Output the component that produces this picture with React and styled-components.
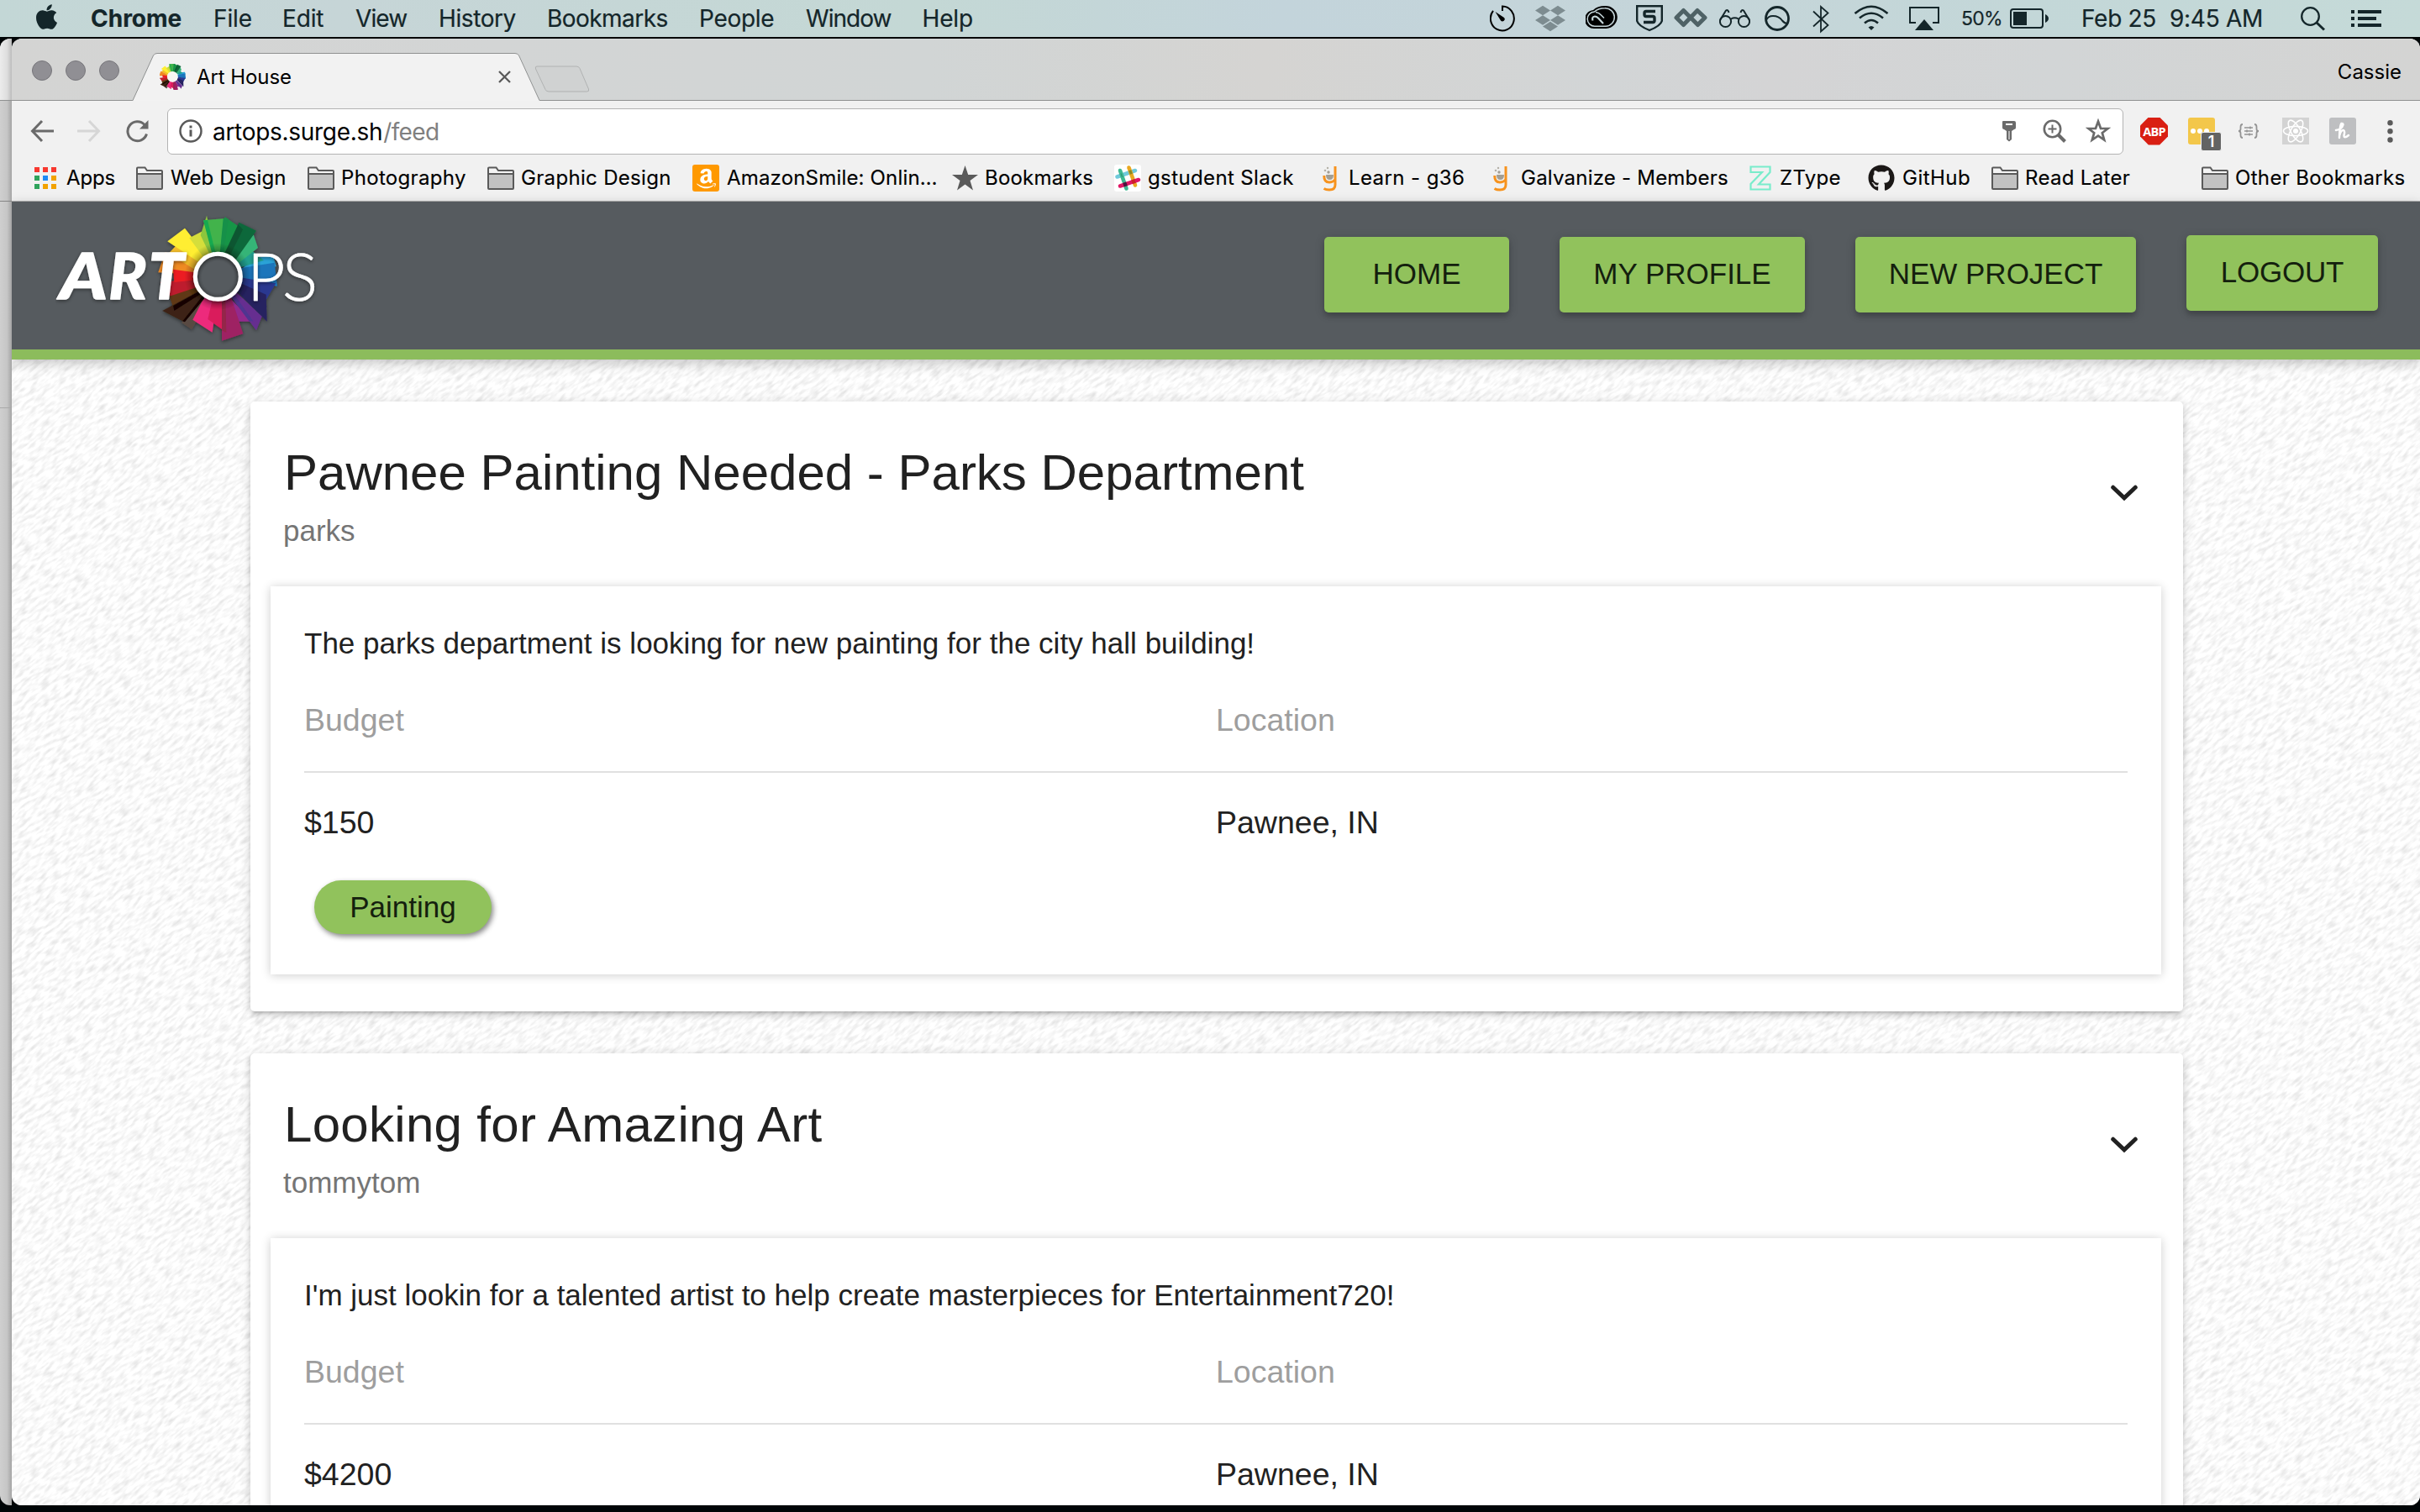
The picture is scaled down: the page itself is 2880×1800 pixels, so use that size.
import React from 'react';
import styled, { createGlobalStyle } from 'styled-components';
import { FaApple, FaAmazon, FaDropbox, FaGithub } from 'react-icons/fa';

const GlobalStyle = createGlobalStyle`
  *, *::before, *::after { box-sizing: border-box; }
  body { margin: 0; background: #000507; overflow: hidden; }
`;

const sans = `"Liberation Sans", Arial, Helvetica, sans-serif`;
const system = `Inter, "Helvetica Neue", sans-serif`;

/* ---------- desktop ---------- */

const Desktop = styled.div`
  width: 2880px;
  height: 1800px;
  display: flex;
  flex-direction: column;
  background: #000507;
  font-family: ${sans};
`;

const MenuBar = styled.header`
  height: 46px;
  flex: none;
  display: flex;
  justify-content: space-between;
  border-bottom: 2px solid #000406;
  background: linear-gradient(90deg, #c3d7d6 0%, #c6d5d7 14%, #c4d8d5 38%, #c3d4db 53%, #c5d5d9 70%, #c3d7d8 84%, #c5dad8 100%);
  color: #14262a;
  font: 500 28px/44px ${system};
`;

const MenuGroup = styled.div`
  display: flex;
  padding-left: ${p => p.$left || 0}px;
  padding-right: ${p => p.$right || 0}px;
`;

const MenuItem = styled.span`
  flex: none;
  width: ${p => p.$w}px;
  white-space: pre;
  font-weight: ${p => (p.$bold ? 700 : 400)};
  font-size: ${p => p.$size || 28}px;
  letter-spacing: ${p => p.$ls || 0}px;
  -webkit-text-stroke: 0.2px currentColor;
`;

const AppleMark = styled(FaApple)`
  width: 27px;
  height: 34px;
  margin: 3px 39px 0 0;
`;

const StatusIcon = styled.svg.attrs(p => ({
  viewBox: `${p.$x} 0 ${p.$w} 44`,
  fill: 'none',
  stroke: 'currentColor',
  strokeWidth: 2,
}))`
  flex: none;
  width: ${p => p.$w}px;
  height: 44px;
  margin-right: ${p => p.$gap}px;
  color: ${p => p.$color || '#14262a'};
`;

const DropboxMark = styled(FaDropbox)`
  flex: none;
  width: 36px;
  height: 36px;
  margin: 4px 24px 0 -1px;
  color: #7d8c90;
`;

const WindowArea = styled.div`
  height: 1746px;
  flex: none;
  display: flex;
`;

const BackWindow = styled.div`
  width: 14px;
  flex: none;
  display: flex;
  flex-direction: column;
  border-radius: 12px 0 0 12px;
  overflow: hidden;
  background: linear-gradient(90deg, #cfcfcf 0%, #c6c6c6 60%, #a4a4a4 100%);
`;

const BackWindowPart = styled.div`
  height: ${p => p.$h}px;
  border-bottom: ${p => p.$line || 2}px solid ${p => p.$edge};
  background: ${p => p.$bg || 'transparent'};
`;

const Browser = styled.div`
  flex: 1;
  min-width: 0;
  display: flex;
  flex-direction: column;
  border-radius: 12px;
  overflow: hidden;
  background: #f1f1f1;
`;

/* ---------- tab strip ---------- */

const TabStrip = styled.div`
  height: 74px;
  flex: none;
  display: flex;
  align-items: flex-end;
  background:
    linear-gradient(#8f9191, #8f9191) bottom / 100% 1px no-repeat,
    linear-gradient(90deg, #d4d4d3 0%, #d3d5d5 20%, #d1d5d5 38%, #d5d4d2 52%, #d2d5d6 66%, #d4d4d5 73%, #d2d5d6 85%, #d4d4d3 100%);
  padding-right: 22px;
`;

const TrafficLights = styled.div`
  display: flex;
  gap: 16px;
  align-self: flex-start;
  padding: 26px 16px 0 24px;
`;

const Light = styled.i`
  width: 24px;
  height: 24px;
  border-radius: 50%;
  background: #908f94;
  border: 1px solid #77767b;
`;

const Tab = styled.div`
  width: 486px;
  height: 57px;
  display: grid;
  & > * { grid-area: 1 / 1; }
`;

const TabBody = styled.div`
  display: flex;
  align-items: center;
  padding: 0 36px 0 32px;
  font: 24px/32px ${system};
  color: #000;
`;

const TabTitle = styled.span`
  flex: 1;
  padding-left: 13px;
  letter-spacing: -0.08px;
`;

const NewTab = styled.svg`
  width: 66px;
  height: 32px;
  margin: 0 0 10px -8px;
`;

const Profile = styled.span`
  margin-left: auto;
  align-self: flex-start;
  padding-top: 24px;
  font: 24px/32px ${system};
  color: #000;
`;

/* ---------- toolbar ---------- */

const Toolbar = styled.div`
  height: 65px;
  flex: none;
  display: flex;
  align-items: center;
  padding: 7px 0 0 22px;
`;

const ToolIcon = styled.svg.attrs(p => ({ viewBox: p.viewBox || `0 0 ${p.$w} ${p.$h || 28}`, fill: p.$fill || 'none' }))`
  flex: none;
  width: ${p => p.$w}px;
  height: ${p => p.$h || 28}px;
  margin-right: ${p => p.$gap || 0}px;
  color: ${p => p.$color || '#5a5a5a'};
`;

const AddressBar = styled.div`
  width: 2328px;
  height: 55px;
  flex: none;
  display: flex;
  align-items: center;
  padding: 0 14px 0 13px;
  margin-right: 20px;
  border: 1px solid #b3b3b3;
  border-radius: 6px;
  background: #fff;
  font: 28px/40px ${system};
  color: #000;
`;

const Url = styled.span`
  flex: 1;
  padding: 1px 0 0 12px;
  letter-spacing: -0.3px;
  em { font-style: normal; color: #808080; letter-spacing: -0.6px; margin-left: 1px; }
`;

const AbpBadge = styled.span`
  width: 33px;
  height: 33px;
  margin-right: 24px;
  display: grid;
  place-items: center;
  background: #d91f13;
  clip-path: polygon(30% 0, 70% 0, 100% 30%, 100% 70%, 70% 100%, 30% 100%, 0 70%, 0 30%);
  color: #fff;
  font: 700 14.5px/33px "Open Sans", ${sans};
  letter-spacing: -0.8px;
`;

const NoteBadge = styled.span`
  position: relative;
  width: 32px;
  height: 32px;
  margin-right: 27px;
  border-radius: 3px;
  background: #f3c74a;
`;

const NoteCount = styled.b`
  position: absolute;
  left: 15px;
  top: 17px;
  width: 25px;
  height: 23px;
  border: 1px solid #f1f1f1;
  border-radius: 3px;
  background: #636363;
  color: #fff;
  font: 600 18px/21px ${system};
  text-align: center;
`;

const NoteDots = styled.i`
  display: flex;
  gap: 2px;
  padding: 13px 0 0 3px;
  i { width: 6px; height: 6px; border-radius: 50%; background: #fff; }
`;

/* ---------- bookmarks ---------- */

const BookmarksBar = styled.nav`
  height: 55px;
  flex: none;
  display: flex;
  align-items: center;
  padding: 0 0 0 27px;
  border-bottom: 1px solid #b3b3b3;
  color: #000;
  font: 24px/32px ${system};
`;

const Bookmark = styled.a`
  flex: none;
  display: flex;
  align-items: center;
  height: 34px;
  width: ${p => p.$w}px;
  letter-spacing: ${p => p.$ls || 0}px;
  white-space: pre;
  -webkit-text-stroke: 0.15px #000;
  margin-left: ${p => (p.$end ? 'auto' : 0)};
`;

const BookmarkIcon = styled.span`
  flex: none;
  display: flex;
  align-items: center;
  width: ${p => p.$w}px;
  height: 34px;
`;

const Tile = styled.span`
  width: 32px;
  height: 32px;
  display: grid;
  place-items: center;
  border-radius: 3px;
  background: ${p => p.$bg};
  color: #fff;
  svg { display: block; }
`;

const AppsGrid = styled.span`
  display: grid;
  grid-template-columns: repeat(3, 6px);
  gap: 4px;
`;

const Dot = styled.i`
  width: 6px;
  height: 6px;
  background: ${p => p.$c};
`;

/* ---------- site ---------- */

const SiteHeader = styled.header`
  height: 188px;
  flex: none;
  position: relative;
  display: flex;
  justify-content: space-between;
  align-items: flex-start;
  padding: 42px 50px 0 52px;
  background: #565b5f;
  border-bottom: 12px solid #8cbc5c;
  box-shadow: 0 4px 14px rgba(0, 0, 0, 0.24);
  z-index: 1;
`;

const Logo = styled.svg`
  width: 320px;
  height: 160px;
  margin-top: -30px;
`;

const Nav = styled.nav`
  display: flex;
  gap: 60px;
`;

const NavButton = styled.a`
  width: ${p => p.$w}px;
  height: 90px;
  margin-top: ${p => p.$shift || 0}px;
  padding-bottom: 2px;
  display: flex;
  align-items: center;
  justify-content: center;
  border-radius: 5px;
  background: #91c25c;
  box-shadow: 0 5px 5px rgba(0, 0, 0, 0.14), 0 2px 12px rgba(0, 0, 0, 0.18);
  color: #14200e;
  font-size: 35px;
  line-height: 44px;
  letter-spacing: ${p => p.$ls || 0}px;
`;

const Page = styled.main`
  flex: 1;
  min-height: 0;
  display: grid;
  grid-template: 1364px / 2866px;
  background: #fff;
  overflow: hidden;
  & > * { grid-area: 1 / 1; }
`;

const Texture = styled.svg`
  display: block;
  width: 2866px;
  height: 1364px;
`;

const Feed = styled.div`
  display: flex;
  flex-direction: column;
  gap: 50px;
  width: 2300px;
  margin: 50px 0 0 284px;
  isolation: isolate;
`;

const Card = styled.article`
  flex: none;
  height: 726px;
  border-radius: 5px;
  background: #fff;
  box-shadow: 0 4px 6px rgba(0, 0, 0, 0.12), 0 2px 13px rgba(0, 0, 0, 0.13), 0 6px 3px -4px rgba(0, 0, 0, 0.12);
`;

const CardHeader = styled.div`
  height: 220px;
  display: flex;
  justify-content: space-between;
  padding: 40px 40px 0 39px;
`;

const Title = styled.h2`
  margin: 0 0 3px 1px;
  font-weight: 400;
  font-size: 60px;
  line-height: 90px;
  letter-spacing: ${p => p.$ls || 0}px;
  color: #212121;
`;

const Author = styled.p`
  margin: 0;
  font-size: 35px;
  line-height: 42px;
  color: #757575;
`;

const Chevron = styled.svg`
  width: 60px;
  height: 60px;
  margin-top: 39px;
`;

const Details = styled.section`
  width: 2250px;
  height: 462px;
  margin-left: 24px;
  padding: 40px;
  background: #fff;
  color: #212121;
  box-shadow: 0 1px 11px rgba(0, 0, 0, 0.2);
`;

const Description = styled.p`
  margin: 0;
  font-size: 35px;
  line-height: 56px;
  letter-spacing: ${p => p.$ls || 0}px;
`;

const Row = styled.div`
  display: grid;
  grid-template-columns: 1fr 1fr;
  font-size: 37.5px;
  line-height: ${p => (p.$head ? 126 : 118)}px;
  height: ${p => (p.$head ? 126 : 118)}px;
  color: ${p => (p.$head ? '#9e9e9e' : '#212121')};
  border-bottom: ${p => (p.$head ? '2px solid #e0e0e0' : '0')};
`;

const Tag = styled.span`
  display: flex;
  align-items: center;
  justify-content: center;
  width: 211px;
  height: 64px;
  margin: 10px 0 0 12px;
  border-radius: 32px;
  background: #91c25c;
  box-shadow: 2px 3px 6px rgba(0, 0, 0, 0.48);
  color: #14200e;
  font-size: 35px;
`;

/* ---------- icons ---------- */

const Folder = () => (
  <svg width="32" height="28" viewBox="0 0 32 28">
    <path d="M1 26V2.500Q1 1.500 2 1.500H10.500L13 5H30Q31 5 31 6V26Q31 27 30 27H2Q1 27 1 26Z" fill="#f4f4f4" stroke="#5a5a5a" strokeWidth="2" />
    <path d="M2 9H30V26H2Z" fill="#c2c2c2" />
    <path d="M1 9H31" stroke="#5a5a5a" strokeWidth="2" />
  </svg>
);

const GalvanizeMark = () => (
  <svg width="17" height="32" viewBox="0 0 17 32">
    <path d="M15 2V24Q15 30 8 30Q4 30 1.500 28.500" fill="none" stroke="#f7931e" strokeWidth="3" />
    <path d="M1.800 13Q1.500 21 8 21Q12 21 15 18" fill="none" stroke="#f7931e" strokeWidth="3" />
    <path d="M4 12H13Q13 18 8.500 18Q4 18 4 12Z" fill="#a39e93" />
    <circle cx="3" cy="7" r="1.300" fill="#b5b1a8" /><circle cx="7" cy="9" r="1.700" fill="#a39e93" /><circle cx="6" cy="4" r="1.200" fill="#b5b1a8" />
  </svg>
);

const SlackMark = () => (
  <svg width="32" height="32" viewBox="0 0 32 32" strokeLinecap="round" strokeWidth="4.600" fill="none">
    <path d="M3.500 14.500L25 7" stroke="#70cadb" />
    <path d="M7 7L14.500 28.500" stroke="#3eb991" />
    <path d="M17.500 3.500L25 24.500" stroke="#e9a820" />
    <path d="M7 25.500L29 18" stroke="#e01765" />
    <path d="M8.300 12.800L9.300 12.450" stroke="#2f8c78" strokeLinecap="butt" strokeWidth="4.800" />
    <path d="M18 9.500L21 8.400" stroke="#8b8a23" strokeLinecap="butt" strokeWidth="4.800" />
    <path d="M11 24.200L15 22.800" stroke="#4b163f" strokeLinecap="butt" strokeWidth="4.800" />
    <path d="M21 20.800L25 19.400" stroke="#cc2027" strokeLinecap="butt" strokeWidth="4.800" />
  </svg>
);

const wheel = [
  ['565,283 590,210 690,255 700,290', '#ef8a24'],
  ['602,215 632,184 715,232 700,275', '#f4bd2c'],
  ['598,172 660,125 745,235 715,250', '#ffee30'],
  ['676,160 720,137 765,230 735,240', '#d5de3b'],
  ['716,150 738,80 772,225 752,225', '#8cc63e'],
  ['905,230 975,222 986,262 862,272', '#29a3d8'],
  ['858,268 980,248 990,332 860,305', '#1b75bb'],
  ['893,200 942,240 862,264 845,245', '#22a08f'],
  ['905,148 921,195 852,250 825,240', '#36b477'],
  ['853,104 915,134 840,240 800,225', '#10673b'],
  ['803,85 868,130 815,225 783,225', '#199546'],
  ['850,112 868,130 822,220 803,212', '#0b5730'],
  ['726,97 803,90 792,225 762,225', '#42b34c'],
  ['726,97 741,96 770,215 757,215', '#19aa50'],
  ['797,90 816,92 798,215 785,215', '#149048'],
  ['866,302 985,322 950,380 855,340', '#2a3990'],
  ['860,322 950,362 953,458 845,350', '#262261'],
  ['840,350 935,440 915,490 822,365', '#662f90'],
  ['812,365 902,458 838,458 795,370', '#92298d'],
  ['835,360 905,458 890,458 822,365', '#4f3590'],
  ['648,462 720,365 745,378 685,487', '#594a42'],
  ['688,452 730,370 775,380 758,497', '#ed2a7b'],
  ['742,450 758,380 798,380 808,497', '#da1c5c'],
  ['792,527 792,380 826,375 868,502', '#9e2063'],
  ['792,490 792,385 805,385 808,497', '#942548'],
  ['572,318 700,305 705,340 610,370', '#be1e2d'],
  ['605,368 705,335 722,360 622,418', '#603913'],
  ['580,420 708,350 730,375 658,460', '#3c2415'],
  ['618,402 712,350 720,358 622,420', '#160500'],
  ['652,457 722,368 730,375 660,460', '#160500'],
  ['618,272 695,283 698,310 622,318', '#ec1c24'],
];

const ArtOpsLogo = () => (
  <Logo viewBox="198 66 960 480">
    <defs>
      <filter id="soft" x="-20%" y="-20%" width="140%" height="140%">
        <feDropShadow dx="0" dy="4" stdDeviation="7" floodColor="#000" floodOpacity="0.5" />
      </filter>
      <radialGradient id="rim" cx="778" cy="298" r="150" gradientUnits="userSpaceOnUse">
        <stop offset="0.55" stopColor="#000" stopOpacity="0.35" />
        <stop offset="0.8" stopColor="#000" stopOpacity="0" />
      </radialGradient>
      <radialGradient id="hub" cx="778" cy="298" r="80" gradientUnits="userSpaceOnUse">
        <stop offset="0.7" stopColor="#565b5f" />
        <stop offset="1" stopColor="#44484b" />
      </radialGradient>
    </defs>
    <g filter="url(#soft)">
      {wheel.map(([points, fill], i) => <polygon key={i} points={points} fill={fill} />)}
      <circle cx="778" cy="298" r="122" fill="url(#rim)" />
    </g>
    <circle cx="778" cy="298" r="82" fill="url(#hub)" />
    <g filter="url(#soft)" fill="#fff" fontFamily="Lato, sans-serif">
      <circle cx="778" cy="298" r="81" fill="none" stroke="#fff" strokeWidth="15" />
      <g fontSize="226" fontWeight="900" fontStyle="italic" stroke="#fff" strokeWidth="4" strokeLinejoin="round">
        <text x="214" y="377" textLength="170" lengthAdjust="spacingAndGlyphs">A</text>
        <text x="388" y="377">R</text>
        <text x="530" y="377">T</text>
      </g>
      <g fontSize="236" fontWeight="300" stroke="#fff" strokeWidth="2">
        <text x="882" y="383">P</text>
        <text x="1008" y="383">S</text>
      </g>
    </g>
  </Logo>
);

const StatusIcons = () => (
  <>
    <StatusIcon $x={1773} $w={30} $gap={25} $color="#000">
      <path d="M1788 13V7.500A14 14.500 0 1 1 1777 12.800" />
      <path d="M1779.500 14L1790 21A2.500 2.500 0 1 1 1786 24.500Z" fill="currentColor" stroke="none" />
    </StatusIcon>
    <DropboxMark />
    <StatusIcon $x={1887} $w={38} $gap={22} $color="#000">
      <path d="M1896 12Q1901 7 1910 7A14 13.500 0 0 1 1911.500 34H1898A11 11 0 0 1 1896 12Z" fill="currentColor" stroke="none" />
      <path d="M1897.500 14Q1902 9.800 1910 9.800A10.800 10.700 0 0 1 1911 31.200H1898A8.600 8.600 0 0 1 1897.500 14Z" stroke="#c5d5d9" strokeWidth="1.500" />
      <path d="M1895.500 24.500Q1894 20 1898 19.500Q1900 19.500 1902 21.500L1908 28" stroke="#c5d5d9" strokeWidth="2.200" />
      <path d="M1899 14.500Q1903 15 1905.500 18L1909 21.500" stroke="#c5d5d9" strokeWidth="1.500" />
    </StatusIcon>
    <StatusIcon $x={1947} $w={32} $gap={13}>
      <path d="M1948.200 7.200H1977.800V25Q1976 31 1963 36Q1950 31 1948.200 25Z" strokeWidth="2.400" />
      <path d="M1970 13.500H1959Q1957 13.500 1957 15.500V17.500Q1957 19.500 1959 19.500H1967Q1969 19.500 1969 21.500V24.500Q1969 26.500 1967 26.500H1956" strokeWidth="3.400" />
    </StatusIcon>
    <StatusIcon $x={1992} $w={40} $gap={14} $color="#4f6266">
      <path d="M2008 17L2003.500 12.500L1995 21L2003.500 29.500L2020 12.500L2029 21L2020.500 29.500L2005 14" strokeWidth="5" strokeLinejoin="round" />
    </StatusIcon>
    <StatusIcon $x={2046} $w={37} $gap={17}>
      <circle cx="2053.500" cy="25.500" r="6.600" /><circle cx="2075.500" cy="25.500" r="6.600" />
      <path d="M2060 22.500Q2064.500 20 2069 22.500M2047 24L2054 12.500Q2056.500 11 2057.500 15M2082 24L2075 12.500Q2072.500 11 2071.500 15" />
    </StatusIcon>
    <StatusIcon $x={2100} $w={30} $gap={27}>
      <circle cx="2115" cy="22" r="13.500" strokeWidth="2.800" />
      <path d="M2102 24Q2104 19 2110 19Q2117 19 2121 24.500Q2124 28 2127 28" />
    </StatusIcon>
    <StatusIcon $x={2157} $w={20} $gap={29}>
      <path d="M2158 13.500L2175.500 30L2167 37.500V8L2175.500 15.500L2158 31.500" strokeWidth="1.800" />
    </StatusIcon>
    <StatusIcon $x={2206} $w={42} $gap={24}>
      <path d="M2207.500 16Q2227 -0.500 2246.500 16M2213 21.500Q2227 10 2241 21.500M2219 27.500Q2227 20.500 2235 27.500" strokeWidth="2.600" />
      <path d="M2223.500 32.500Q2227 29.500 2230.500 32.500L2227 36Z" fill="currentColor" stroke="none" />
    </StatusIcon>
    <StatusIcon $x={2272} $w={36} $gap={26}>
      <path d="M2280 27H2273V9H2307V27H2300" />
      <path d="M2290 23L2301 36H2279Z" fill="currentColor" stroke="none" />
    </StatusIcon>
  </>
);

const FeedCard = ({ title, titleLs, author, text, ls, budget, place, tag }) => (
  <Card>
    <CardHeader>
      <div>
        <Title $ls={titleLs}>{title}</Title>
        <Author>{author}</Author>
      </div>
      <Chevron viewBox="0 0 24 24">
        <path d="M6.700 9.300L12 14.300L17.300 9.300" fill="none" stroke="#212121" strokeWidth="2" strokeLinecap="round" />
      </Chevron>
    </CardHeader>
    <Details>
      <Description $ls={ls}>{text}</Description>
      <Row $head><span>Budget</span><span>Location</span></Row>
      <Row><span>{budget}</span><span>{place}</span></Row>
      {tag && <Tag>{tag}</Tag>}
    </Details>
  </Card>
);

const folder = <Folder />;

const bookmarks = [
  { label: 'Apps', w: 121, iw: 38, ls: -0.18, icon: <AppsGrid>{['#f8382f', '#f8382f', '#f8382f', '#2fa35b', '#1f8bf5', '#f2a200', '#2fa35b', '#f2a200', '#f2a200'].map((c, i) => <Dot key={i} $c={c} />)}</AppsGrid> },
  { label: 'Web Design', w: 204, iw: 41, ls: 0.1, icon: folder },
  { label: 'Photography', w: 214, iw: 40, ls: 0.33, icon: folder },
  { label: 'Graphic Design', w: 244, iw: 40, ls: 0.32, icon: folder },
  { label: 'AmazonSmile: Onlin…', w: 309, iw: 41, ls: 0.18, icon: <Tile $bg="#ff9900"><FaAmazon size={27} /></Tile> },
  { label: 'Bookmarks', w: 193, iw: 39, ls: 0.2, icon: (
    <svg width="31" height="30" viewBox="0 0 31 30"><path d="M15.500 0L19.200 11H31L21.500 18L25 29.500L15.500 22.500L6 29.500L9.500 18L0 11H11.800Z" fill="#5a5a5a" /></svg>
  ) },
  { label: 'gstudent Slack', w: 248, iw: 40, ls: 0.38, icon: <Tile $bg="#fff"><SlackMark /></Tile> },
  { label: 'Learn - g36', w: 203, iw: 31, ls: 0.41, icon: <GalvanizeMark /> },
  { label: 'Galvanize - Members', w: 305, iw: 33, ls: 0.22, icon: <GalvanizeMark /> },
  { label: 'ZType', w: 141, iw: 36, ls: 0.33, icon: (
    <svg width="26" height="30" viewBox="0 0 26 30"><path d="M1.500 1.500H24.500V8L11 22.500H24.500V28.500H1.500V22L15 8H1.500Z" fill="none" stroke="#79eccb" strokeWidth="2.200" /></svg>
  ) },
  { label: 'GitHub', w: 147, iw: 41, ls: 0.48, icon: <FaGithub size={32} color="#1b1817" /> },
  { label: 'Read Later', w: 180, iw: 40, ls: 0.32, icon: folder },
];

const projects = [
  {
    title: 'Pawnee Painting Needed - Parks Department', titleLs: 0, author: 'parks',
    text: 'The parks department is looking for new painting for the city hall building!',
    ls: 0.01, budget: '$150', place: 'Pawnee, IN', tag: 'Painting',
  },
  {
    title: 'Looking for Amazing Art', titleLs: 0.3, author: 'tommytom',
    text: "I'm just lookin for a talented artist to help create masterpieces for Entertainment720!",
    ls: 0.01, budget: '$4200', place: 'Pawnee, IN',
  },
];

export default function App() {
  return (
    <Desktop>
      <GlobalStyle />
      <MenuBar>
        <MenuGroup $left={42}>
          <AppleMark />
          <MenuItem $w={146} $bold>Chrome</MenuItem>
          <MenuItem $w={82} $ls={-0.13}>File</MenuItem>
          <MenuItem $w={87} $ls={-0.15}>Edit</MenuItem>
          <MenuItem $w={99} $ls={-0.9}>View</MenuItem>
          <MenuItem $w={129} $ls={-0.4}>History</MenuItem>
          <MenuItem $w={181} $ls={-0.55}>Bookmarks</MenuItem>
          <MenuItem $w={127} $ls={-0.29}>People</MenuItem>
          <MenuItem $w={138.5} $ls={-0.95}>Window</MenuItem>
          <MenuItem $w={80} $ls={-0.17}>Help</MenuItem>
        </MenuGroup>
        <MenuGroup $right={46}>
          <StatusIcons />
          <MenuItem $w={58} $size={23} $ls={-0.7}>50%</MenuItem>
          <StatusIcon $x={2392} $w={46} $gap={39}>
            <rect x="2393" y="11" width="38" height="22" rx="3" />
            <path d="M2396 14H2412V30H2396Z" fill="currentColor" stroke="none" />
            <path d="M2434 17Q2438 19 2438 22T2434 27Z" fill="currentColor" stroke="none" />
          </StatusIcon>
          <MenuItem $w={105} $ls={-0.31}>Feb 25</MenuItem>
          <MenuItem $w={156} $ls={-0.29}>9:45 AM</MenuItem>
          <StatusIcon $x={2738} $w={29} $gap={31}>
            <circle cx="2749.500" cy="19.500" r="10.300" strokeWidth="2.300" />
            <path d="M2756.500 26.500L2766 35.500" strokeWidth="3" />
          </StatusIcon>
          <StatusIcon $x={2798} $w={36} $gap={0}>
            <path d="M2798 14H2802M2806 14H2834M2798 22H2802M2806 22H2828M2798 30H2802M2806 30H2834" strokeWidth="4" />
          </StatusIcon>
        </MenuGroup>
      </MenuBar>

      <WindowArea>
        <BackWindow>
          <BackWindowPart $h={74} $line={1} $edge="#8f9191" $bg="linear-gradient(90deg, #ececec, #dedede 60%, #bdbdbd)" />
          <BackWindowPart $h={120} $line={1} $edge="#858585" />
          <BackWindowPart $h={246} $line={1} $edge="#a9a9a9" />
        </BackWindow>
        <Browser>
          <TabStrip>
            <TrafficLights><Light /><Light /><Light /></TrafficLights>
            <Tab>
              <svg width="486" height="57" viewBox="0 0 486 57">
                <path d="M0 57L24.500 3Q26 0.500 29 0.500H455Q458 0.500 459.500 3L484 56.500V57Z" fill="#f2f2f2" />
                <path d="M0 56.500L24.500 3Q26 0.500 29 0.500H455Q458 0.500 459.500 3L484 56.500" fill="none" stroke="#8f9191" />
              </svg>
              <TabBody>
                <svg width="31" height="31" viewBox="620 140 320 320">
                  {wheel.map(([points, fill], i) => <polygon key={i} points={points} fill={fill} transform="translate(778 298) scale(0.770) translate(-778 -298)" />)}
                  <circle cx="778" cy="298" r="66" fill="#f6f6f2" />
                </svg>
                <TabTitle>Art House</TabTitle>
                <svg width="15" height="15" viewBox="0 0 15 15"><path d="M1 1L14 14M14 1L1 14" stroke="#5a5a5a" strokeWidth="2.300" /></svg>
              </TabBody>
            </Tab>
            <NewTab viewBox="0 0 66 32">
              <path d="M3 1H50Q53 1 54 3.500L64.500 28Q65.500 31 62.500 31H17Q14 31 13 28.500L1.500 4Q0.500 1 3 1Z" fill="#d0d2d2" stroke="#b0b2b2" />
            </NewTab>
            <Profile>Cassie</Profile>
          </TabStrip>

          <Toolbar>
            <ToolIcon $w={28} $gap={28} $color="#6a6a6a"><path d="M28 14H3M14 2L2.500 14L14 26" stroke="currentColor" strokeWidth="3" /></ToolIcon>
            <ToolIcon $w={28} $gap={29} $color="#d6d6d6"><path d="M0 14H25M14 2L25.500 14L14 26" stroke="currentColor" strokeWidth="3" /></ToolIcon>
            <ToolIcon $w={28} $gap={22} $color="#6a6a6a">
              <path d="M23 6.500A11.500 11.500 0 1 0 25.500 17.500" stroke="currentColor" strokeWidth="3" />
              <path d="M27.500 1V11.500H17Z" fill="currentColor" />
            </ToolIcon>
            <AddressBar>
              <ToolIcon $w={28}>
                <circle cx="14" cy="14" r="12.500" stroke="currentColor" strokeWidth="2.500" />
                <path d="M14 12.500V20.500M14 7.500V10.500" stroke="currentColor" strokeWidth="3" />
              </ToolIcon>
              <Url>artops.surge.sh<em>/feed</em></Url>
              <ToolIcon $w={18} $h={26} $gap={31}>
                <path d="M1 2Q1 1 2 1H15Q17 1 17 3V9Q17 11 15 11L12 13V23L9 25.500L6 23V13L3 11Q1 11 1 9Z" fill="#6a6a6a" />
                <path d="M5 4H13V6H5Z" fill="#fff" /><path d="M9 13V23" stroke="#fff" />
              </ToolIcon>
              <ToolIcon $w={28} $gap={23}>
                <circle cx="11.500" cy="11.500" r="9.700" stroke="#6a6a6a" strokeWidth="2.600" />
                <path d="M6.500 11.500H16.500M11.500 6.500V16.500" stroke="#6a6a6a" strokeWidth="2" />
                <path d="M18.500 18.500L26.500 26.500" stroke="#6a6a6a" strokeWidth="4" />
              </ToolIcon>
              <ToolIcon $w={30} $h={30}>
                <path d="M15 3.500L18 11.800L26.600 12L19.800 17.200L22.200 25.500L15 20.700L7.800 25.500L10.200 17.200L3.400 12L12 11.800Z" stroke="#6a6a6a" strokeWidth="2.700" />
              </ToolIcon>
            </AddressBar>
            <AbpBadge>ABP</AbpBadge>
            <NoteBadge>
              <NoteDots><i /><i /><i /></NoteDots>
              <NoteCount>1</NoteCount>
            </NoteBadge>
            <ToolIcon $w={26} $h={18} $gap={27} $color="#949494">
              <path d="M6 1Q3.500 1 3.500 4V6.500Q3.500 9 1 9Q3.500 9 3.500 11.500V14Q3.500 17 6 17M20 1Q22.500 1 22.500 4V6.500Q22.500 9 25 9Q22.500 9 22.500 11.500V14Q22.500 17 20 17" stroke="currentColor" strokeWidth="1.800" />
              <path d="M8 5H18M8 9H18M8 13H18M15 3.500V6.500M11 7.500V10.500M14 11.500V14.500" stroke="currentColor" strokeWidth="1.500" />
            </ToolIcon>
            <ToolIcon $w={32} $h={32} $gap={24}>
              <rect width="32" height="32" fill="#d3d3d3" />
              <g stroke="#fff" strokeWidth="1.600">
                <ellipse cx="16" cy="16" rx="14.500" ry="5.600" />
                <ellipse cx="16" cy="16" rx="14.500" ry="5.600" transform="rotate(60 16 16)" />
                <ellipse cx="16" cy="16" rx="14.500" ry="5.600" transform="rotate(120 16 16)" />
              </g>
              <circle cx="16" cy="16" r="3" fill="#fff" />
            </ToolIcon>
            <ToolIcon $w={32} $h={32} $gap={37}>
              <rect width="32" height="32" rx="3" fill="#bebfc1" />
              <path d="M8 15Q15 14 16.500 8.500Q16.500 6.500 14.500 7Q12.500 9 12 24M12.300 21Q14 14.500 17 15Q19 16 17.500 21Q17.500 25.500 23 21" stroke="#fff" strokeWidth="2.500" strokeLinecap="round" />
            </ToolIcon>
            <ToolIcon $w={7} $h={27}>
              <circle cx="3.500" cy="3.300" r="3.200" fill="#5a5a5a" /><circle cx="3.500" cy="13.300" r="3.200" fill="#5a5a5a" /><circle cx="3.500" cy="23.500" r="3.200" fill="#5a5a5a" />
            </ToolIcon>
          </Toolbar>

          <BookmarksBar>
            {bookmarks.map(b => (
              <Bookmark key={b.label} $w={b.w} $ls={b.ls}>
                <BookmarkIcon $w={b.iw}>{b.icon}</BookmarkIcon>
                {b.label}
              </Bookmark>
            ))}
            <Bookmark $w={260} $ls={0.33} $end>
              <BookmarkIcon $w={40}>{folder}</BookmarkIcon>
              Other Bookmarks
            </Bookmark>
          </BookmarksBar>

          <SiteHeader>
            <ArtOpsLogo />
            <Nav>
              <NavButton $w={220}>HOME</NavButton>
              <NavButton $w={292}>MY PROFILE</NavButton>
              <NavButton $w={334}>NEW PROJECT</NavButton>
              <NavButton $w={228} $shift={-2} $ls={-0.2}>LOGOUT</NavButton>
            </Nav>
          </SiteHeader>

          <Page>
            <Texture viewBox="0 0 2866 1364">
              <filter id="paper" x="0" y="0" width="100%" height="100%">
                <feTurbulence type="fractalNoise" baseFrequency="0.08 0.26" numOctaves="2" seed="7" />
                <feColorMatrix values="0 0 0 0 0  0 0 0 0 0  0 0 0 0 0  0.24 0 0 0 -0.1" />
              </filter>
              <g transform="rotate(-40 1433 682)">
                <rect x="-400" y="-1200" width="3700" height="3700" filter="url(#paper)" />
              </g>
            </Texture>
            <Feed>
              {projects.map(p => <FeedCard key={p.title} {...p} />)}
            </Feed>
          </Page>
        </Browser>
      </WindowArea>
    </Desktop>
  );
}
